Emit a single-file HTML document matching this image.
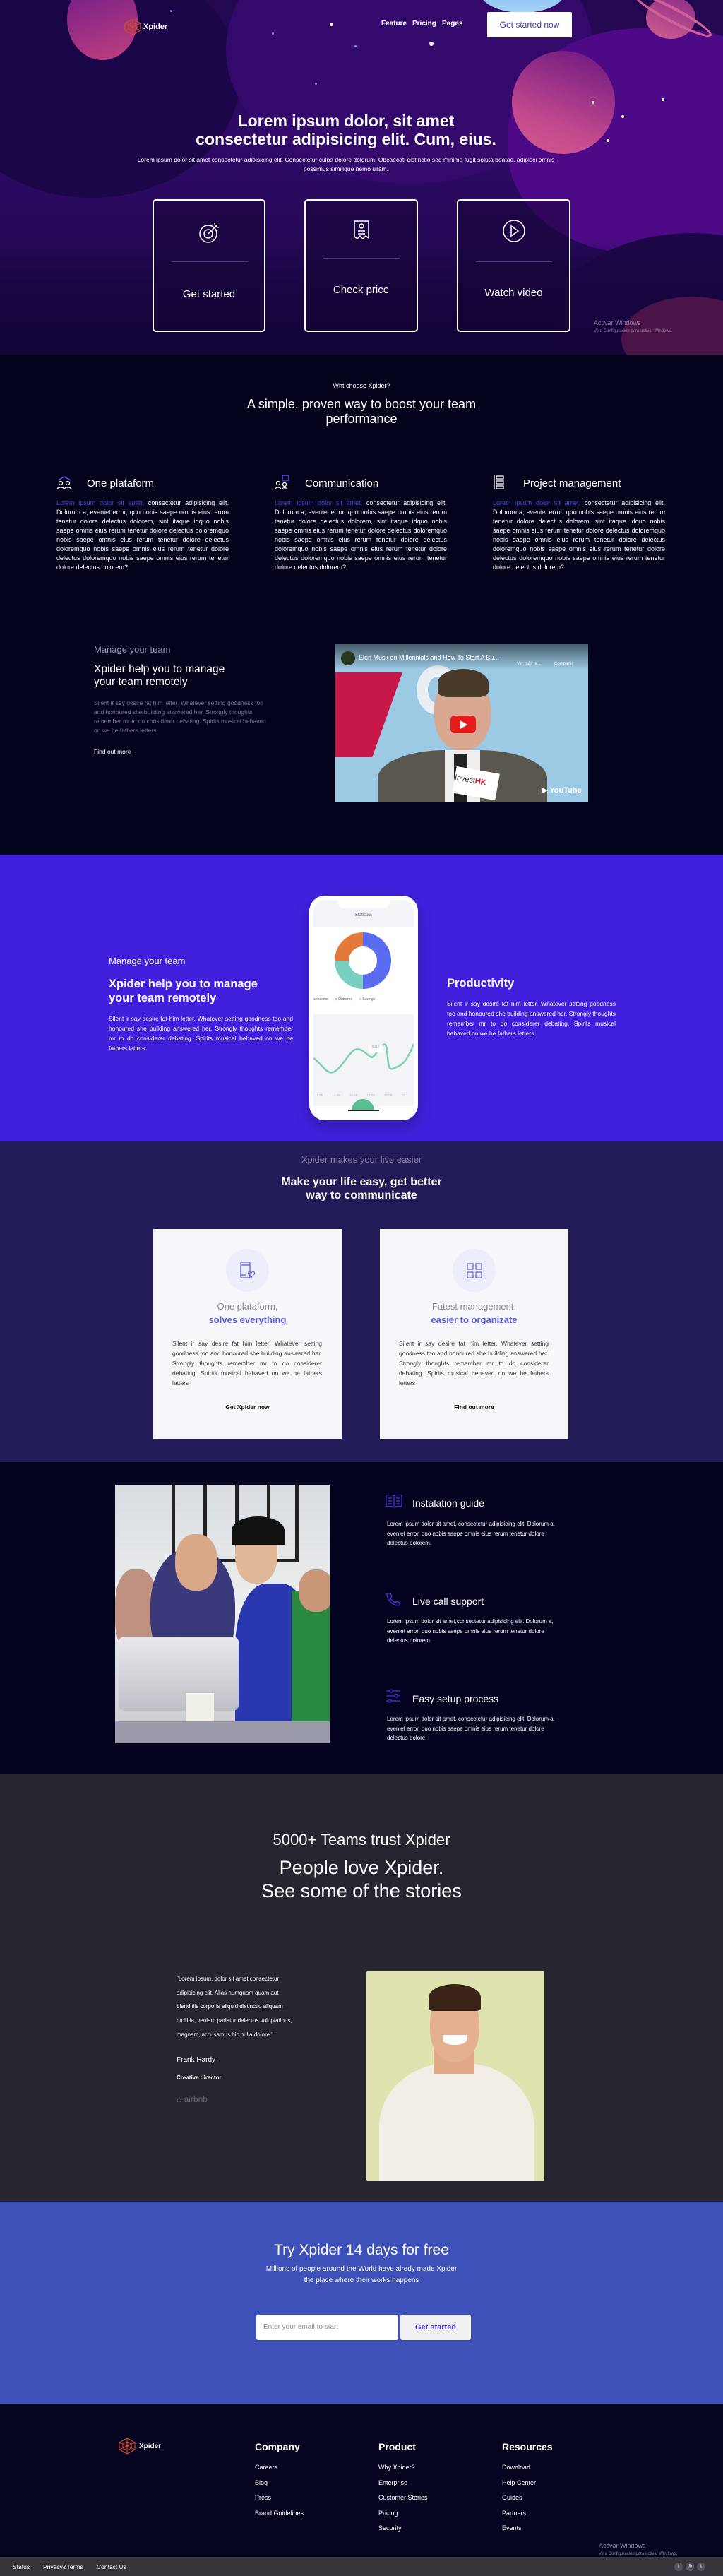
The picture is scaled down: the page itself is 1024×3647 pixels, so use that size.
<!DOCTYPE html>
<html><head><meta charset="utf-8">
<style>
*{margin:0;padding:0;box-sizing:border-box}
body{width:1024px;height:3647px;font-family:"Liberation Sans",sans-serif;background:#04031c;color:#fff;position:relative;overflow:hidden}
.a{position:absolute}
.c{text-align:center}
p{margin:0}
.j{text-align:justify}
</style></head><body>

<!-- HERO -->
<div class="a" style="left:0;top:0;width:1024px;height:502px;overflow:hidden;background:linear-gradient(180deg,#22084e 0%,#300a68 40%,#240856 70%,#12053a 100%)">
  <div class="a" style="left:-80px;top:-60px;width:420px;height:340px;border-radius:50%;background:#1a0648"></div>
  <div class="a" style="left:320px;top:-120px;width:520px;height:380px;border-radius:50%;background:#330a6c"></div>
  <div class="a" style="left:720px;top:40px;width:420px;height:320px;border-radius:45%;background:#4e0a86"></div>
  <div class="a" style="left:780px;top:330px;width:400px;height:260px;border-radius:50%;background:#1c0648"></div>
  <div class="a" style="left:0;top:330px;width:1024px;height:172px;background:linear-gradient(180deg,rgba(22,6,60,0),#14053a)"></div>
  <div class="a" style="left:95px;top:-30px;width:100px;height:115px;border-radius:50%;background:linear-gradient(160deg,#6a1a8a,#c2407e)"></div>
  <div class="a" style="left:680px;top:-40px;width:120px;height:58px;border-radius:50%;background:linear-gradient(180deg,#6aa8e8,#a8d4f8)"></div>
  <div class="a" style="left:725px;top:72px;width:146px;height:146px;border-radius:50%;background:linear-gradient(200deg,#6a1680,#c44a8e 70%,#d4588e)"></div>
  <div class="a" style="left:915px;top:-5px;width:70px;height:60px;border-radius:50%;background:linear-gradient(200deg,#8a2a8a,#d0608e)"></div>
  <div class="a" style="left:890px;top:10px;width:125px;height:22px;border-radius:50%;border:4px solid #d06098;transform:rotate(28deg)"></div>
  <div class="a" style="left:880px;top:420px;width:200px;height:120px;border-radius:50%;background:#4a1448"></div>
  <div class="a" style="left:467px;top:32px;width:5px;height:5px;border-radius:50%;background:#fff"></div>
  <div class="a" style="left:608px;top:59px;width:6px;height:6px;border-radius:50%;background:#fff"></div>
  <div class="a" style="left:838px;top:143px;width:4px;height:4px;border-radius:50%;background:#fff"></div>
  <div class="a" style="left:880px;top:163px;width:4px;height:4px;border-radius:50%;background:#fff"></div>
  <div class="a" style="left:937px;top:139px;width:4px;height:4px;border-radius:50%;background:#fff"></div>
  <div class="a" style="left:859px;top:197px;width:4px;height:4px;border-radius:50%;background:#fff"></div>
  <div class="a" style="left:241px;top:14px;width:3px;height:3px;border-radius:50%;background:#6a9cff"></div>
  <div class="a" style="left:385px;top:46px;width:3px;height:3px;border-radius:50%;background:#6a9cff"></div>
  <div class="a" style="left:502px;top:64px;width:3px;height:3px;border-radius:50%;background:#6a9cff"></div>
  <div class="a" style="left:446px;top:117px;width:3px;height:3px;border-radius:50%;background:#6a9cff"></div>
  <svg class="a" style="left:175px;top:26px" width="26" height="24" viewBox="0 0 26 24" fill="none" stroke="#d04a2a" stroke-width="1.2"><polygon points="13,1 24,7 24,17 13,23 2,17 2,7"/><polygon points="13,6 19,9 19,15 13,18 7,15 7,9"/><path d="M13 1V23M2 7L24 17M24 7L2 17"/></svg>
  <div class="a" style="left:203px;top:32px;font-size:11px;font-weight:bold">Xpider</div>
  <div class="a" style="left:540px;top:28px;font-size:10px;font-weight:bold">Feature</div>
  <div class="a" style="left:584px;top:28px;font-size:10px;font-weight:bold">Pricing</div>
  <div class="a" style="left:626px;top:28px;font-size:10px;font-weight:bold">Pages</div>
  <div class="a c" style="left:690px;top:17px;width:120px;height:36px;background:#fff;border-radius:2px;color:#4a3cb0;font-size:12px;line-height:36px">Get started now</div>
  <div class="a c" style="left:240px;top:158px;width:500px;font-size:23px;font-weight:bold;line-height:26px">Lorem ipsum dolor, sit amet<br>consectetur adipisicing elit. Cum, eius.</div>
  <div class="a c" style="left:180px;top:220px;width:620px;font-size:8.5px;line-height:13px">Lorem ipsum dolor sit amet consectetur adipisicing elit. Consectetur culpa dolore dolorum! Obcaecati distinctio sed minima fugit soluta beatae, adipisci omnis possimus similique nemo ullam.</div>
  <div class="a" style="left:216px;top:282px;width:160px;height:188px;border:2px solid #fff;border-radius:5px;background:rgba(20,4,50,.5)">
    <svg class="a" style="left:62px;top:28px" width="34" height="34" viewBox="0 0 34 34" fill="none" stroke="#fff" stroke-width="1.5"><circle cx="15" cy="19" r="12"/><circle cx="15" cy="19" r="6"/><path d="M15 19L28 6M24 4l1 5 5 1"/></svg>
    <div class="a" style="left:25px;top:86px;width:108px;height:1px;background:#4a3a7a"></div>
    <div class="a c" style="left:0;top:124px;width:156px;font-size:15px">Get started</div>
  </div>
  <div class="a" style="left:431px;top:282px;width:161px;height:188px;border:2px solid #fff;border-radius:5px;background:rgba(20,4,50,.5)">
    <svg class="a" style="left:67px;top:27px" width="26" height="30" viewBox="0 0 26 30" fill="none" stroke="#fff" stroke-width="1.5"><path d="M2 2H22V26L18 23 14 27 10 23 6 27 2 24Z"/><circle cx="12" cy="9" r="3"/><path d="M7 16H17M7 20H17"/></svg>
    <div class="a" style="left:25px;top:81px;width:108px;height:1px;background:#4a3a7a"></div>
    <div class="a c" style="left:0;top:118px;width:157px;font-size:15px">Check price</div>
  </div>
  <div class="a" style="left:647px;top:282px;width:161px;height:188px;border:2px solid #fff;border-radius:5px;background:rgba(20,4,50,.5)">
    <svg class="a" style="left:62px;top:26px" width="34" height="34" viewBox="0 0 34 34" fill="none" stroke="#fff" stroke-width="1.5"><circle cx="17" cy="17" r="15"/><path d="M13 10L23 17 13 24Z"/></svg>
    <div class="a" style="left:25px;top:86px;width:108px;height:1px;background:#4a3a7a"></div>
    <div class="a c" style="left:0;top:122px;width:157px;font-size:15px">Watch video</div>
  </div>
  <div class="a" style="left:841px;top:452px;font-size:9px;color:#8a80a0">Activar Windows</div>
  <div class="a" style="left:841px;top:466px;font-size:6px;color:#8a80a0">Ve a Configuración para activar Windows.</div>
</div>

<div class="a c" style="left:0;top:541px;width:1024px;font-size:9px">Wht choose Xpider?</div>
<div class="a c" style="left:300px;top:562px;width:424px;font-size:18px;line-height:21px">A simple, proven way to boost your team<br>performance</div>

<svg class="a" style="left:80px;top:674px" width="22" height="20" viewBox="0 0 22 20" fill="none" stroke="#fff" stroke-width="1.3"><path d="M2 6L11 1 20 6" stroke="#6a5aff"/><circle cx="6" cy="10" r="2.5"/><circle cx="16" cy="10" r="2.5"/><path d="M1 19c0-4 10-4 10 0M11 19c0-4 10-4 10 0"/></svg>
<div class="a" style="left:123px;top:676px;font-size:15px">One plataform</div>
<svg class="a" style="left:389px;top:672px" width="22" height="22" viewBox="0 0 22 22" fill="none" stroke="#fff" stroke-width="1.3"><rect x="11" y="1" width="9" height="7" stroke="#6a5aff"/><circle cx="5" cy="12" r="2.5"/><circle cx="14" cy="14" r="2.5"/><path d="M1 21c0-4 8-4 8 0M10 21c0-3 8-3 8 0"/></svg>
<div class="a" style="left:432px;top:676px;font-size:15px">Communication</div>
<svg class="a" style="left:698px;top:672px" width="18" height="22" viewBox="0 0 18 22" fill="none" stroke="#fff" stroke-width="1.3"><path d="M2 1V21"/><rect x="5" y="2" width="10" height="4"/><rect x="5" y="9" width="10" height="4"/><rect x="5" y="16" width="10" height="4"/></svg>
<div class="a" style="left:741px;top:676px;font-size:15px">Project management</div>

<div class="a j" style="left:80px;top:706px;width:244px;font-size:9px;line-height:13px"><span style="color:#4a4ae0">Lorem ipsum dolor sit amet,</span> consectetur adipisicing elit. Dolorum a, eveniet error, quo nobis saepe omnis eius rerum tenetur dolore delectus dolorem, sint itaque idquo nobis saepe omnis eius rerum tenetur dolore delectus doloremquo nobis saepe omnis eius rerum tenetur dolore delectus doloremquo nobis saepe omnis eius rerum tenetur dolore delectus doloremquo nobis saepe omnis eius rerum tenetur dolore delectus dolorem?</div>
<div class="a j" style="left:389px;top:706px;width:244px;font-size:9px;line-height:13px"><span style="color:#4a4ae0">Lorem ipsum dolor sit amet,</span> consectetur adipisicing elit. Dolorum a, eveniet error, quo nobis saepe omnis eius rerum tenetur dolore delectus dolorem, sint itaque idquo nobis saepe omnis eius rerum tenetur dolore delectus doloremquo nobis saepe omnis eius rerum tenetur dolore delectus doloremquo nobis saepe omnis eius rerum tenetur dolore delectus doloremquo nobis saepe omnis eius rerum tenetur dolore delectus dolorem?</div>
<div class="a j" style="left:698px;top:706px;width:244px;font-size:9px;line-height:13px"><span style="color:#4a4ae0">Lorem ipsum dolor sit amet,</span> consectetur adipisicing elit. Dolorum a, eveniet error, quo nobis saepe omnis eius rerum tenetur dolore delectus dolorem, sint itaque idquo nobis saepe omnis eius rerum tenetur dolore delectus doloremquo nobis saepe omnis eius rerum tenetur dolore delectus doloremquo nobis saepe omnis eius rerum tenetur dolore delectus doloremquo nobis saepe omnis eius rerum tenetur dolore delectus dolorem?</div>

<div class="a" style="left:133px;top:912px;font-size:13px;color:#9a98b0">Manage your team</div>
<div class="a" style="left:133px;top:939px;font-size:15.5px;line-height:18px">Xpider help you to manage<br>your team remotely</div>
<div class="a" style="left:133px;top:989px;width:250px;font-size:8.5px;line-height:13px;color:#7a7890">Silent ir say desire fat him letter. Whatever setting goodness too and honoured she building answered her. Strongly thoughts remember mr to do considerer debating. Spirits musical behaved on we he fathers letters</div>
<div class="a" style="left:133px;top:1059px;font-size:8.5px">Find out more</div>

<div class="a" style="left:475px;top:912px;width:358px;height:224px;overflow:hidden;background:#9ccae4">
  <div class="a" style="left:0;top:40px;width:95px;height:120px;background:#c8184a;clip-path:polygon(0 0,100% 0,55% 100%,0 100%)"></div>
  <div class="a" style="left:115px;top:30px;width:60px;height:70px;border-radius:50%;border:16px solid #e8eef2;border-right-color:transparent"></div>
  <div class="a" style="left:60px;top:150px;width:240px;height:100px;border-radius:40% 40% 0 0;background:#5a5650"></div>
  <div class="a" style="left:155px;top:150px;width:50px;height:80px;background:#eee"></div>
  <div class="a" style="left:168px;top:155px;width:18px;height:70px;background:#222"></div>
  <div class="a" style="left:140px;top:45px;width:80px;height:105px;border-radius:45%;background:#d8a890"></div>
  <div class="a" style="left:145px;top:35px;width:72px;height:40px;border-radius:50% 50% 20% 20%;background:#4a3a2a"></div>
  <div class="a" style="left:168px;top:178px;width:62px;height:38px;background:#fff;transform:rotate(10deg);color:#222;font-size:11px;padding-top:10px">Invest<b style="color:#d01030">HK</b></div>
  <div class="a" style="left:0;top:0;width:358px;height:36px;background:linear-gradient(rgba(0,0,0,.55),rgba(0,0,0,0))"></div>
  <div class="a" style="left:8px;top:10px;width:20px;height:20px;border-radius:50%;background:#2a3a20"></div>
  <div class="a" style="left:33px;top:14px;font-size:9px">Elon Musk on Millennials and How To Start A Bu...</div>
  <div class="a" style="left:257px;top:25px;font-size:6px">Ver más ta...</div>
  <div class="a" style="left:310px;top:25px;font-size:6px">Compartir</div>
  <div class="a" style="left:163px;top:101px;width:36px;height:25px;border-radius:6px;background:#e61c1c"></div>
  <div class="a" style="left:177px;top:108px;width:0;height:0;border-left:10px solid #fff;border-top:6px solid transparent;border-bottom:6px solid transparent"></div>
  <div class="a" style="left:292px;top:200px;font-size:11px;font-weight:bold">▶ YouTube</div>
</div>

<div class="a" style="left:0;top:1210px;width:1024px;height:406px;background:#4120dd">
  <div class="a" style="left:154px;top:143px;font-size:13px">Manage your team</div>
  <div class="a" style="left:154px;top:173px;font-size:16.5px;font-weight:bold;line-height:20px">Xpider help you to manage<br>your team remotely</div>
  <div class="a j" style="left:154px;top:225px;width:261px;font-size:8.5px;line-height:14px">Silent ir say desire fat him letter. Whatever setting goodness too and honoured she building answered her. Strongly thoughts remember mr to do considerer debating. Spirits musical behaved on we he fathers letters</div>
  <div class="a" style="left:633px;top:173px;font-size:16.5px;font-weight:bold">Productivity</div>
  <div class="a j" style="left:633px;top:204px;width:239px;font-size:8.5px;line-height:14px">Silent ir say desire fat him letter. Whatever setting goodness too and honoured she building answered her. Strongly thoughts remember mr to do considerer debating. Spirits musical behaved on we he fathers letters</div>
  <div class="a" style="left:438px;top:58px;width:154px;height:318px;border-radius:22px;background:#fff;box-shadow:0 8px 20px rgba(0,0,0,.25)">
    <div class="a" style="left:6px;top:6px;width:142px;height:38px;background:#f3f4f8;border-radius:16px 16px 0 0"></div>
    <div class="a" style="left:40px;top:6px;width:74px;height:12px;background:#fff;border-radius:0 0 10px 10px"></div>
    <div class="a c" style="left:0;top:25px;width:154px;font-size:6px;color:#555">Statistics</div>
    <div class="a" style="left:36px;top:52px;width:80px;height:80px;border-radius:50%;background:conic-gradient(#5a6cf0 0 50%,#7ad0c0 50% 75%,#e47a3a 75% 100%)"></div>
    <div class="a" style="left:56px;top:72px;width:40px;height:40px;border-radius:50%;background:#fff"></div>
    <div class="a" style="left:6px;top:144px;font-size:5px;color:#555">● Income &nbsp;&nbsp;&nbsp;&nbsp;&nbsp; <span style="color:#e05050">●</span> Outcome &nbsp;&nbsp;&nbsp;&nbsp;&nbsp; <span style="color:#7ad0c0">●</span> Savings</div>
    <div class="a" style="left:6px;top:168px;width:142px;height:130px;background:#f3f4f8"></div>
    <svg class="a" style="left:6px;top:200px" width="142" height="60" viewBox="0 0 142 60" fill="none"><path d="M0 30C15 40 20 60 35 45S55 10 70 20 80 35 95 15 100 50 112 45 130 40 142 10" stroke="#7ad0b0" stroke-width="2.5"/></svg>
    <div class="a" style="left:84px;top:212px;width:20px;height:10px;background:#fff;font-size:5px;color:#aaa;text-align:center">$512</div>
    <div class="a" style="left:8px;top:280px;font-size:4.5px;color:#bbb;word-spacing:12px">12.09 14.09 16.09 18.09 20.09 22.</div>
    <div class="a" style="left:60px;top:288px;width:32px;height:16px;border-radius:16px 16px 0 0;background:#58c090"></div>
    <div class="a" style="left:55px;top:303px;width:44px;height:2px;background:#222"></div>
  </div>
</div>

<div class="a" style="left:0;top:1616px;width:1024px;height:454px;background:#211c58">
  <div class="a c" style="left:0;top:18px;width:1024px;font-size:13px;color:#8a84a8">Xpider makes your live easier</div>
  <div class="a c" style="left:0;top:48px;width:1024px;font-size:16px;font-weight:bold;line-height:19px">Make your life easy, get better<br>way to communicate</div>
  <div class="a" style="left:217px;top:124px;width:267px;height:297px;background:#f6f7fa">
    <div class="a" style="left:103px;top:28px;width:61px;height:61px;border-radius:50%;background:#eceefc"></div>
    <svg class="a" style="left:122px;top:46px" width="24" height="26" viewBox="0 0 24 26" fill="none" stroke="#5a5ae0" stroke-width="1.2"><rect x="2" y="1" width="13" height="22" rx="1"/><path d="M2 5H15M2 19H10"/><path d="M17 22l-4-4a2 2 0 013-3l1 1 1-1a2 2 0 013 3z"/></svg>
    <div class="a c" style="left:0;top:100px;width:267px;font-size:13px;line-height:19px;color:#8a8a98">One plataform,<br><b style="color:#5a5ae0">solves everything</b></div>
    <div class="a j" style="left:27px;top:155px;width:212px;font-size:8.5px;line-height:14px;color:#333">Silent ir say desire fat him letter. Whatever setting goodness too and honoured she building answered her. Strongly thoughts remember mr to do considerer debating. Spirits musical behaved on we he fathers letters</div>
    <div class="a c" style="left:0;top:247px;width:267px;font-size:8.5px;font-weight:bold;color:#111">Get Xpider now</div>
  </div>
  <div class="a" style="left:538px;top:124px;width:267px;height:297px;background:#f6f7fa">
    <div class="a" style="left:103px;top:28px;width:61px;height:61px;border-radius:50%;background:#eceefc"></div>
    <svg class="a" style="left:122px;top:47px" width="24" height="24" viewBox="0 0 24 24" fill="none" stroke="#5a5ae0" stroke-width="1.2"><rect x="2" y="2" width="8" height="8"/><rect x="14" y="2" width="8" height="8"/><rect x="2" y="14" width="8" height="8"/><rect x="14" y="14" width="8" height="8"/></svg>
    <div class="a c" style="left:0;top:100px;width:267px;font-size:13px;line-height:19px;color:#8a8a98">Fatest management,<br><b style="color:#5a5ae0">easier to organizate</b></div>
    <div class="a j" style="left:27px;top:155px;width:212px;font-size:8.5px;line-height:14px;color:#333">Silent ir say desire fat him letter. Whatever setting goodness too and honoured she building answered her. Strongly thoughts remember mr to do considerer debating. Spirits musical behaved on we he fathers letters</div>
    <div class="a c" style="left:0;top:247px;width:267px;font-size:8.5px;font-weight:bold;color:#111">Find out more</div>
  </div>
</div>

<div class="a" style="left:0;top:2070px;width:1024px;height:442px;background:#03021f">
  <div class="a" style="left:163px;top:32px;width:304px;height:366px;overflow:hidden;background:linear-gradient(180deg,#d8dce0,#eef0f0 50%,#c8c8cc)">
    <div class="a" style="left:80px;top:0;width:180px;height:110px;border:5px solid #222;border-top:none;background:repeating-linear-gradient(90deg,transparent 0 40px,#222 40px 45px)"></div>
    <div class="a" style="left:0;top:120px;width:60px;height:120px;border-radius:40%;background:#c09080"></div>
    <div class="a" style="left:50px;top:90px;width:120px;height:180px;border-radius:45%;background:#3a3a7a"></div>
    <div class="a" style="left:85px;top:70px;width:60px;height:80px;border-radius:45%;background:#d8a888"></div>
    <div class="a" style="left:170px;top:140px;width:110px;height:226px;border-radius:40% 40% 0 0;background:#2a38b0"></div>
    <div class="a" style="left:170px;top:55px;width:60px;height:85px;border-radius:45%;background:#e0b898"></div>
    <div class="a" style="left:165px;top:45px;width:75px;height:40px;border-radius:50% 50% 0 0;background:#111"></div>
    <div class="a" style="left:250px;top:150px;width:60px;height:200px;background:#2a8a40"></div>
    <div class="a" style="left:260px;top:120px;width:50px;height:60px;border-radius:45%;background:#c89878"></div>
    <div class="a" style="left:5px;top:215px;width:170px;height:105px;border-radius:8px;background:linear-gradient(180deg,#e8e8ec,#c0c0c8)"></div>
    <div class="a" style="left:100px;top:295px;width:40px;height:45px;background:#f0efe8;border-radius:0 0 8px 8px"></div>
    <div class="a" style="left:0;top:335px;width:304px;height:31px;background:#9a9aa8"></div>
  </div>
  <svg class="a" style="left:546px;top:45px" width="24" height="20" viewBox="0 0 24 20" fill="none" stroke="#4a3ae0" stroke-width="1.2"><path d="M12 3C8 1 4 1 1 2V18C4 17 8 17 12 19 16 17 20 17 23 18V2C20 1 16 1 12 3ZM12 3V19M4 6H9M4 10H9M4 14H9M15 6H20M15 10H20M15 14H20"/></svg>
  <div class="a" style="left:584px;top:50px;font-size:14px">Instalation guide</div>
  <div class="a" style="left:548px;top:81px;width:245px;font-size:8px;line-height:13.5px">Lorem ipsum dolor sit amet, consectetur adipisicing elit. Dolorum a, eveniet error, quo nobis saepe omnis eius rerum tenetur dolore delectus dolorem.</div>
  <svg class="a" style="left:546px;top:184px" width="22" height="20" viewBox="0 0 22 20" fill="none" stroke="#4a3ae0" stroke-width="1.3"><path d="M3 2L7 2 9 6 7 8C8 11 11 14 14 15L16 13 20 15V18C20 19 18 19 17 19 9 18 3 11 2 4 2 3 2 2 3 2Z"/></svg>
  <div class="a" style="left:584px;top:189px;font-size:14px">Live call support</div>
  <div class="a" style="left:548px;top:219px;width:245px;font-size:8px;line-height:13.5px">Lorem ipsum dolor sit amet,consectetur adipisicing elit. Dolorum a, eveniet error, quo nobis saepe omnis eius rerum tenetur dolore delectus dolorem.</div>
  <svg class="a" style="left:546px;top:321px" width="22" height="20" viewBox="0 0 22 20" fill="none" stroke="#4a3ae0" stroke-width="1.2"><path d="M1 3H6M10 3H21M1 10H13M17 10H21M1 17H4M8 17H21"/><circle cx="8" cy="3" r="2"/><circle cx="15" cy="10" r="2"/><circle cx="6" cy="17" r="2"/></svg>
  <div class="a" style="left:584px;top:327px;font-size:14px">Easy setup process</div>
  <div class="a" style="left:548px;top:357px;width:245px;font-size:8px;line-height:13.5px">Lorem ipsum dolor sit amet, consectetur adipisicing elit. Dolorum a, eveniet error, quo nobis saepe omnis eius rerum tenetur dolore delectus dolore.</div>
</div>

<div class="a" style="left:0;top:2512px;width:1024px;height:605px;background:#272530">
  <div class="a c" style="left:0;top:80px;width:1024px;font-size:22px">5000+ Teams trust Xpider</div>
  <div class="a c" style="left:0;top:116px;width:1024px;font-size:27px;line-height:33px">People love Xpider.<br>See some of the stories</div>
  <div class="a" style="left:250px;top:280px;width:166px;font-size:8px;line-height:19.7px">"Lorem ipsum, dolor sit amet consectetur adipisicing elit. Alias numquam quam aut blanditiis corporis aliquid distinctio aliquam mollitia, veniam pariatur delectus voluptatibus, magnam, accusamus hic nulla dolore."</div>
  <div class="a" style="left:250px;top:399px;font-size:10px">Frank Hardy</div>
  <div class="a" style="left:250px;top:425px;font-size:8px;font-weight:bold">Creative director</div>
  <div class="a" style="left:250px;top:453px;font-size:12px;color:#6a6878">⌂ airbnb</div>
  <div class="a" style="left:519px;top:279px;width:252px;height:297px;overflow:hidden;background:#dfe3b0;border-radius:2px">
    <div class="a" style="left:18px;top:130px;width:220px;height:200px;border-radius:45% 45% 0 0;background:#f2eee6"></div>
    <div class="a" style="left:95px;top:105px;width:58px;height:40px;background:#e0a888"></div>
    <div class="a" style="left:90px;top:28px;width:70px;height:100px;border-radius:45%;background:#e4b090"></div>
    <div class="a" style="left:88px;top:18px;width:74px;height:38px;border-radius:50% 50% 10% 10%;background:#3a2418"></div>
    <div class="a" style="left:108px;top:90px;width:34px;height:14px;border-radius:0 0 50% 50%;background:#fff"></div>
  </div>
</div>

<div class="a" style="left:0;top:3117px;width:1024px;height:286px;background:#3e51b9">
  <div class="a c" style="left:0;top:57px;width:1024px;font-size:21px">Try Xpider 14 days for free</div>
  <div class="a c" style="left:0;top:88px;width:1024px;font-size:10px;line-height:16px">Millions of people around the World have alredy made Xpider<br>the place where their works happens</div>
  <div class="a" style="left:363px;top:160px;width:201px;height:36px;background:#fff;border-radius:3px;font-size:10px;color:#888;line-height:36px;padding-left:10px">Enter your email to start</div>
  <div class="a c" style="left:567px;top:160px;width:100px;height:36px;background:#f0f0f0;border-radius:3px;font-size:11px;font-weight:bold;color:#4a30d8;line-height:36px">Get started</div>
</div>

<div class="a" style="left:0;top:3403px;width:1024px;height:217px;background:#050520">
  <svg class="a" style="left:167px;top:48px" width="26" height="24" viewBox="0 0 26 24" fill="none" stroke="#d04a2a" stroke-width="1.2"><polygon points="13,1 24,7 24,17 13,23 2,17 2,7"/><polygon points="13,6 19,9 19,15 13,18 7,15 7,9"/><path d="M13 1V23M2 7L24 17M24 7L2 17"/></svg>
  <div class="a" style="left:197px;top:55px;font-size:10px;font-weight:bold">Xpider</div>
  <div class="a" style="left:361px;top:53px;font-size:14px;font-weight:bold">Company</div>
  <div class="a" style="left:536px;top:53px;font-size:14px;font-weight:bold">Product</div>
  <div class="a" style="left:711px;top:53px;font-size:14px;font-weight:bold">Resources</div>
  <div class="a" style="left:361px;top:80px;font-size:9px;line-height:21.5px">Careers<br>Blog<br>Press<br>Brand Guidelines</div>
  <div class="a" style="left:536px;top:80px;font-size:9px;line-height:21.5px">Why Xpider?<br>Enterprise<br>Customer Stories<br>Pricing<br>Security</div>
  <div class="a" style="left:711px;top:80px;font-size:9px;line-height:21.5px">Download<br>Help Center<br>Guides<br>Partners<br>Events</div>
  <div class="a" style="left:848px;top:196px;font-size:9px;color:#8a88a0">Activar Windows</div>
  <div class="a" style="left:848px;top:210px;font-size:6px;color:#8a88a0">Ve a Configuración para activar Windows.</div>
</div>
<div class="a" style="left:0;top:3620px;width:1024px;height:27px;background:#36353c;font-size:8.5px">
  <div class="a" style="left:18px;top:9px">Status</div>
  <div class="a" style="left:61px;top:9px">Privacy&amp;Terms</div>
  <div class="a" style="left:137px;top:9px">Contact Us</div>
  <div class="a c" style="left:955px;top:8px;width:12px;height:12px;border-radius:50%;background:#55545c;font-size:7px;line-height:12px">f</div>
  <div class="a c" style="left:971px;top:8px;width:12px;height:12px;border-radius:50%;background:#55545c;font-size:7px;line-height:12px">◎</div>
  <div class="a c" style="left:987px;top:8px;width:12px;height:12px;border-radius:50%;background:#55545c;font-size:7px;line-height:12px">t</div>
</div>
</body></html>
